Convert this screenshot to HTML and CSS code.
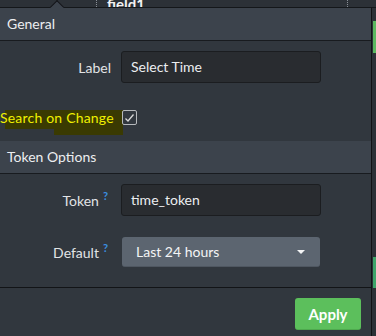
FILE: index.html
```html
<!DOCTYPE html>
<html>
<head>
<meta charset="utf-8">
<link rel="stylesheet" href="styles.css">
</head>
<body>
<div class="page">
  <div class="topstrip">
    <span class="dots dots-a"></span>
    <span class="field">field1</span>
    <span class="dots dots-b"></span>
  </div>
  <div class="main">
    <div class="popup">
      <span class="caret"></span>
      <div class="section-head">General</div>
      <div class="section section-general">
        <div class="row row-input">
          <label class="lbl">Label</label>
          <div class="input">Select Time</div>
        </div>
        <div class="row row-check">
          <span class="hl hl-a"></span><span class="hl hl-b"></span>
          <label class="lbl lbl-search">Search on Change</label>
          <span class="checkbox">
            <svg width="11" height="10" viewBox="0 0 11 10"><path d="M1.5 5.5 L4 8 L9.5 1.5" fill="none" stroke="#d8d8d8" stroke-width="1.3"/></svg>
          </span>
        </div>
      </div>
      <div class="section-head">Token Options</div>
      <div class="section section-token">
        <div class="row row-input">
          <label class="lbl">Token<sup class="help">?</sup></label>
          <div class="input">time_token</div>
        </div>
        <div class="row row-select">
          <label class="lbl">Default<sup class="help">?</sup></label>
          <div class="select"><span>Last 24 hours</span><span class="tri"></span></div>
        </div>
      </div>
      <div class="footer">
        <button class="apply">Apply</button>
      </div>
    </div>
    <div class="edge">
      <div class="edge-green g1"></div>
      <div class="edge-green g2"></div>
    </div>
  </div>
</div>
</body>
</html>
```
FILE: styles.css
```css
* { box-sizing: border-box; }
html, body { margin: 0; padding: 0; }
body {
  width: 376px;
  height: 336px;
  overflow: hidden;
  background: #2a2e34;
  font-family: Lato, "Liberation Sans", sans-serif;
  font-size: 14px;
  color: #e4e6e8;
}
.page { display: flex; flex-direction: column; height: 336px; }
.topstrip {
  height: 7px;
  overflow: hidden;
  display: flex;
  background: #2c3137;
  position: relative;
}
.dots { width: 0; height: 7px; border-left: 1px dotted #8a8f96; }
.dots-a { margin-left: 96px; }
.field {
  margin-left: 10px;
  margin-top: -4px;
  font-weight: bold;
  font-size: 15px;
  line-height: 16px;
  color: #f2f2f2;
}
.dots-b { margin-left: 202px; }
.main { display: flex; flex: 1; }
.popup {
  width: 372px;
  border-top: 1px solid #14171a;
  border-right: 1px solid #111315;
  background: #31373e;
  position: relative;
  display: flex;
  flex-direction: column;
}
.caret {
  position: absolute;
  left: 52px;
  top: -6px;
  width: 10px;
  height: 10px;
  transform: rotate(45deg);
  background: #3c434c;
  border-left: 1px solid #121417;
  border-top: 1px solid #121417;
}
.section-head {
  height: 33px;
  background: #3c434c;
  border-bottom: 1px solid #181b1f;
  padding-left: 7px;
  line-height: 32px;
  font-size: 14px;
  color: #eceef0;
  position: relative;
}
.section { position: relative; }
.section-general { padding: 10px 0 16px; }
.section-token { padding: 10px 0 20px; }
.row {
  display: grid;
  grid-template-columns: 111px 200px;
  column-gap: 10px;
  align-items: center;
  position: relative;
}
.lbl { text-align: right; color: #e2e4e6; white-space: nowrap; position: relative; z-index: 1; }
.input {
  height: 32px;
  background: #292c30;
  border: 1px solid #1b1d20;
  border-radius: 3px;
  padding-left: 9px;
  line-height: 30px;
  color: #eceef0;
}
.row-check { margin-top: 27px; height: 15px; }
.lbl-search { color: #f0f000; letter-spacing: 0.2px; line-height: 15px; }
.hl { position: absolute; background: #3a3a02; }
.hl-a { left: 5px; top: 0; width: 118px; height: 19px; }
.hl-b { left: 54px; top: 0; width: 69px; height: 25px; }
.checkbox {
  width: 15px;
  height: 15px;
  border: 1px solid #b6b9bc;
  border-radius: 2px;
  display: flex;
  align-items: center;
  justify-content: center;
  position: relative;
  z-index: 1;
  margin-left: 1px;
}
.help {
  color: #3b8fe0;
  font-size: 11px;
  font-weight: bold;
  margin-left: 4px;
  margin-right: 3px;
  vertical-align: 6px;
  line-height: 0;
}
.row-select { margin-top: 21px; }
.select {
  margin-left: 1px;
  width: 198px;
  height: 30px;
  background: #5c6570;
  border-radius: 3px;
  border-bottom: 1px solid #4f5761;
  padding: 0 14px 0 14px;
  display: flex;
  align-items: center;
  justify-content: space-between;
  color: #f4f5f6;
}
.tri {
  width: 0; height: 0;
  border-left: 4px solid transparent;
  border-right: 4px solid transparent;
  border-top: 4px solid #f4f5f6;
  margin-right: 1px;
}
.footer {
  border-top: 1px solid #121417;
  padding: 10px 10px 0 0;
  display: flex;
  justify-content: flex-end;
  flex: 1;
}
.apply {
  width: 66px;
  height: 32px;
  background: #5cbf5c;
  border: none;
  border-bottom: 1px solid #4ea94e;
  border-radius: 3px;
  color: #ffffff;
  font-family: Lato, "Liberation Sans", sans-serif;
  font-weight: bold;
  font-size: 15px;
  padding: 0;
}
.edge {
  flex: 1;
  background: #2c3137;
  display: flex;
  flex-direction: column;
  border-top: 1px solid #14171a;
}
.edge-green { background: #5cb860; margin-left: 1px; }
.g1 { margin-top: 13px; height: 32px; }
.g2 { margin-top: 204px; height: 31px; background: #3fa46a; }
```
